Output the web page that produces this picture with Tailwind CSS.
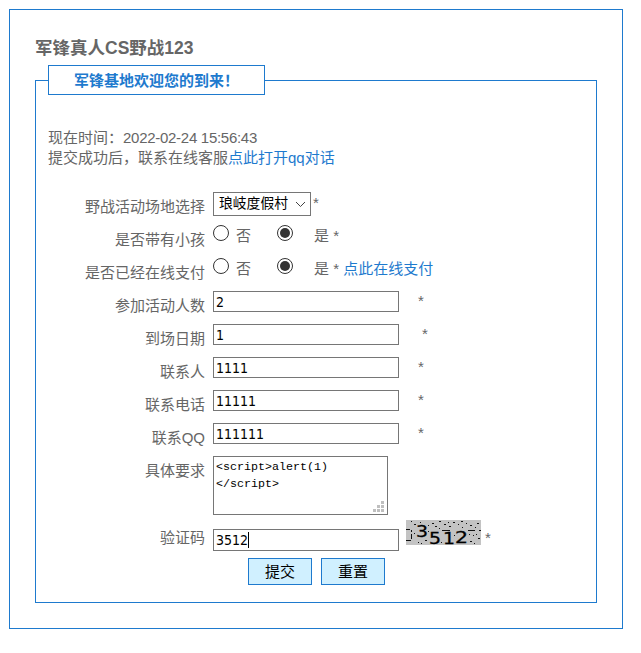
<!DOCTYPE html>
<html lang="zh-CN">
<head>
    <meta charset="UTF-8">
    <meta name="viewport" content="width=device-width, initial-scale=1.0">
    <title>军锋真人CS野战123</title>
    <script src="https://cdn.jsdelivr.net/npm/@tailwindcss/browser@4"></script>
</head>
<body class="bg-white pt-[9px] pl-[9px] font-['Liberation_Sans','Noto_Sans_CJK_SC',sans-serif] text-[15px] leading-5 text-[#666]">
    <div class="w-[614px] h-[620px] border border-[#1e7ace] px-[25px] pt-[25px]">
        <h1 class="h-[30px] leading-[26px] text-[17.5px] font-bold whitespace-nowrap">军锋真人CS野战123</h1>

        <form class="mt-[15px] w-[562px] h-[523px] border border-[#1e7ace] px-3" onsubmit="return false">
            <div class="-mt-4 w-[217px] h-[30px] border border-[#1e7ace] bg-white pl-[25px] leading-[29px] font-bold text-[#1e7ace] whitespace-nowrap">军锋基地欢迎您的到来！</div>

            <div class="mt-[33px] whitespace-nowrap">
                <p>现在时间：<span class="tracking-[-0.28px]">2022-02-24 15:56:43</span></p>
                <p>提交成功后，联系在线客服<a href="#" class="text-[#1e7ace]">点此打开qq对话</a></p>
            </div>

            <div class="mt-[21px]">
                <div class="flex h-[33px]">
                    <label class="w-[157px] mr-2 pt-2 text-right">野战活动场地选择</label>
                    <div class="mt-[3px] flex w-[98px] h-6 items-center justify-between border border-[#767676] pl-[5px] pr-1 text-[13.8px] text-black whitespace-nowrap">
                        琅岐度假村
                        <svg class="w-[11px] h-[7px]" viewBox="0 0 11 7" fill="none" stroke="#444"><path d="M1 1l4.5 4.5L10 1"/></svg>
                    </div>
                    <span class="ml-0.5 pt-1">*</span>
                </div>

                <div class="flex h-[33px]">
                    <label class="w-[157px] mr-2 pt-2 text-right">是否带有小孩</label>
                    <svg class="mt-[3px] size-4" viewBox="0 0 16 16"><circle cx="8" cy="8" r="7.5" fill="#fff" stroke="#333"/></svg>
                    <span class="ml-[7px] w-[41px] pt-1">否</span>
                    <svg class="mt-[3px] size-4" viewBox="0 0 16 16"><circle cx="8" cy="8" r="7.5" fill="#fff" stroke="#333"/><circle cx="8" cy="8" r="5" fill="#333"/></svg>
                    <span class="ml-[21px] pt-1">是 *</span>
                </div>

                <div class="flex h-[33px]">
                    <label class="w-[157px] mr-2 pt-2 text-right">是否已经在线支付</label>
                    <svg class="mt-[3px] size-4" viewBox="0 0 16 16"><circle cx="8" cy="8" r="7.5" fill="#fff" stroke="#333"/></svg>
                    <span class="ml-[7px] w-[41px] pt-1">否</span>
                    <svg class="mt-[3px] size-4" viewBox="0 0 16 16"><circle cx="8" cy="8" r="7.5" fill="#fff" stroke="#333"/><circle cx="8" cy="8" r="5" fill="#333"/></svg>
                    <span class="ml-[21px] pt-1">是 * <a href="#" class="text-[#1e7ace]">点此在线支付</a></span>
                </div>

                <div class="flex h-[33px]">
                    <label class="w-[157px] mr-2 pt-2 text-right">参加活动人数</label>
                    <input type="text" value="2" class="mt-[3px] w-[186px] h-[21px] border border-[#767676] px-0.5 font-['DejaVu_Sans_Condensed','DejaVu_Sans',sans-serif] text-[14px] text-black">
                    <span class="ml-[19px] pt-[3px]">*</span>
                </div>

                <div class="flex h-[33px]">
                    <label class="w-[157px] mr-2 pt-2 text-right">到场日期</label>
                    <input type="text" value="1" class="mt-[3px] w-[186px] h-[21px] border border-[#767676] px-0.5 font-['DejaVu_Sans_Condensed','DejaVu_Sans',sans-serif] text-[14px] text-black">
                    <span class="ml-[23px] pt-[3px]">*</span>
                </div>

                <div class="flex h-[33px]">
                    <label class="w-[157px] mr-2 pt-2 text-right">联系人</label>
                    <input type="text" value="1111" class="mt-[3px] w-[186px] h-[21px] border border-[#767676] px-0.5 font-['DejaVu_Sans_Condensed','DejaVu_Sans',sans-serif] text-[14px] text-black">
                    <span class="ml-[19px] pt-[3px]">*</span>
                </div>

                <div class="flex h-[33px]">
                    <label class="w-[157px] mr-2 pt-2 text-right">联系电话</label>
                    <input type="text" value="11111" class="mt-[3px] w-[186px] h-[21px] border border-[#767676] px-0.5 font-['DejaVu_Sans_Condensed','DejaVu_Sans',sans-serif] text-[14px] text-black">
                    <span class="ml-[19px] pt-[3px]">*</span>
                </div>

                <div class="flex h-[33px]">
                    <label class="w-[157px] mr-2 pt-2 text-right">联系QQ</label>
                    <input type="text" value="111111" class="mt-[3px] w-[186px] h-[21px] border border-[#767676] px-0.5 font-['DejaVu_Sans_Condensed','DejaVu_Sans',sans-serif] text-[14px] text-black">
                    <span class="ml-[19px] pt-[3px]">*</span>
                </div>

                <div class="flex h-[67px]">
                    <label class="w-[157px] mr-2 pt-2 text-right">具体要求</label>
                    <div class="mt-[3px] flex w-[175px] h-[59px] justify-between border border-[#767676] pt-0.5 pl-0.5 pr-[3px] pb-0.5">
                        <div class="font-['Liberation_Mono',monospace] text-[11.67px] leading-[17px] text-black">&lt;script&gt;alert(1)<br>&lt;/script&gt;</div>
                        <svg class="size-[11px] self-end" viewBox="0 0 11 11" fill="#bfbfbf"><path d="M8 0h3v3H8zM4 4h3v3H4zM8 4h3v3H8zM0 8h3v3H0zM4 8h3v3H4zM8 8h3v3H8z"/></svg>
                    </div>
                </div>

                <div class="flex h-[38px]">
                    <label class="w-[157px] mr-2 pt-2 text-right">验证码</label>
                    <div class="mt-[9px] flex w-[186px] h-[22px] items-center border border-[#767676] pl-0.5 font-['DejaVu_Sans_Condensed','DejaVu_Sans',sans-serif] text-[14px] text-black">3512<span class="h-4 w-px bg-black"></span></div>
                    <svg class="ml-[7px] w-[75px] h-[25px] overflow-visible" viewBox="0 0 75 25" shape-rendering="crispEdges">
                        <rect width="75" height="25" fill="#c3c3c3"/>
                        <g fill="#000" stroke="#000" stroke-width=".3" font-family="DejaVu Sans" font-size="15">
                            <text x="10" y="17" textLength="12" lengthAdjust="spacingAndGlyphs">3</text>
                            <text x="23" y="23.500" textLength="12" lengthAdjust="spacingAndGlyphs">5</text>
                            <text x="37" y="23.500" textLength="12" lengthAdjust="spacingAndGlyphs">1</text>
                            <text x="49" y="22.500" textLength="13" lengthAdjust="spacingAndGlyphs">2</text>
                        </g>
                        <path stroke="#111" d="M0 9.5h4M0 20.5h5M5.500 10v2M5.500 14v5M36 10.500h8M62 10.500h7M5 1.500h1M8 4.500h2M14 2.500h1M26 3.500h2M22 5.500h1M33 1.500h2M38 4.500h2M42 2.500h1M47 2.500h2M52 4.500h1M55 1.500h2M60 3.500h1M64 5.500h2M71 3.500h2M73 10.500h2M67 15.500h1M72 18.500h2M70 14.500h1M64 21.500h2M68 23.500h1M35 22.500h1M19 20.500h2M15 23.500h1M12 22.500h1M8 13.500h1M29 6.500h2M33 8.500h1M43 6.500h2M56 7.500h1M69 7.500h1M48 15.500h1M63 14.500h1M22 11.500h1"/>
                    </svg>
                    <span class="ml-1 pt-2">*</span>
                </div>

                <div class="flex gap-[9px] pl-[200px]">
                    <button type="submit" class="w-16 h-[27px] border border-[#1e7ace] bg-[#d0f0ff] text-black">提交</button>
                    <button type="reset" class="w-16 h-[27px] border border-[#1e7ace] bg-[#d0f0ff] text-black">重置</button>
                </div>
            </div>
        </form>
    </div>
</body>
</html>
